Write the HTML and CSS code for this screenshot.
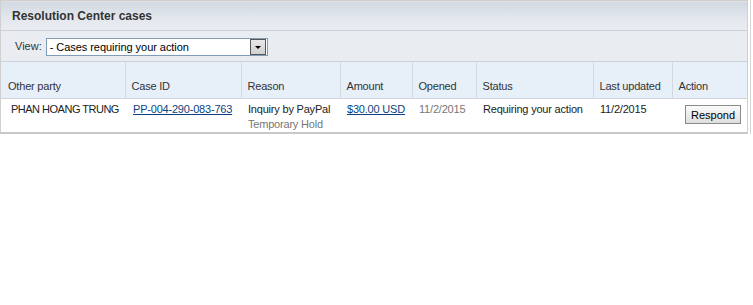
FILE: index.html
```html
<!DOCTYPE html>
<html lang="en">

<head>
    <meta charset="UTF-8">
    <title>Resolution Center cases</title>
    <link rel="stylesheet" href="styles.css">
</head>

<body>
    <div class="panel">
        <div class="panel-head">Resolution Center cases</div>

        <div class="view-row">
            <label for="viewSelect">View:</label>
            <div class="fake-select" id="viewSelect">
                <span class="select-text">- Cases requiring your action</span>
                <span class="select-btn"><span class="arrow"></span></span>
            </div>
        </div>

        <table class="cases">
            <colgroup>
                <col style="width:124px">
                <col style="width:116px">
                <col style="width:99px">
                <col style="width:72px">
                <col style="width:64px">
                <col style="width:117px">
                <col style="width:79px">
                <col style="width:75px">
            </colgroup>
            <thead>
                <tr>
                    <th>Other party</th>
                    <th>Case ID</th>
                    <th>Reason</th>
                    <th>Amount</th>
                    <th>Opened</th>
                    <th>Status</th>
                    <th>Last updated</th>
                    <th>Action</th>
                </tr>
            </thead>
            <tbody>
                <tr>
                    <td>PHAN HOANG TRUNG</td>
                    <td><a href="#">PP-004-290-083-763</a></td>
                    <td>Inquiry by PayPal<br><span class="muted">Temporary Hold</span></td>
                    <td><a href="#">$30.00 USD</a></td>
                    <td class="muted">11/2/2015</td>
                    <td>Requiring your action</td>
                    <td>11/2/2015</td>
                    <td class="action"><button class="respond-btn">Respond</button></td>
                </tr>
            </tbody>
        </table>
    </div>
</body>

</html>
```

FILE: styles.css
```css
body {
    margin: 0;
    background: #fff;
    font-family: 'Liberation Sans', Arial, sans-serif;
    font-size: 11px;
    color: #222;
}

.panel {
    width: 746px;
    border: 1px solid #cfcfcf;
    border-bottom: 2px solid #c8c8c8;
    box-shadow: 2px 0 0 #fff, 3px 0 0 #d4d4d4;
}

.panel-head {
    height: 28px;
    line-height: 29px;
    padding-left: 11px;
    font-size: 12px;
    font-weight: bold;
    color: #333;
    background: linear-gradient(#d2d9e2, #e4e8ee 60%, #e9ecf1);
    border-top: 1px solid #e0e0e0;
    border-bottom: 1px solid #cdd1d6;
}

.view-row {
    display: flex;
    align-items: center;
    height: 30px;
    padding-left: 14px;
    background: #e9edf2;
    border-bottom: 1px solid #cdd2d8;
    color: #333;
}

.view-row label {
    margin-right: 4px;
}

.fake-select {
    display: flex;
    align-items: center;
    width: 220px;
    height: 16px;
    border: 1px solid #7f9db9;
    background: #fff;
    margin-top: 1px;
}

.select-text {
    flex: 1;
    padding-left: 3px;
    color: #000;
    letter-spacing: -0.05px;
}

.select-btn {
    display: flex;
    align-items: center;
    justify-content: center;
    width: 14px;
    height: 14px;
    margin-right: 1px;
    border: 1px solid #555;
    background: linear-gradient(#e8e8e8, #d0d0d0);
}

.arrow {
    width: 0;
    height: 0;
    border-left: 3px solid transparent;
    border-right: 3px solid transparent;
    border-top: 3px solid #000;
    margin-top: 2px;
}

.cases {
    width: 746px;
    border-collapse: collapse;
    table-layout: fixed;
}

.cases th,
.cases td {
    white-space: nowrap;
    letter-spacing: -0.2px;
}

.cases th {
    height: 25px;
    padding: 11px 4px 0 6px;
    text-align: left;
    font-weight: normal;
    color: #333;
    background: #e7eff9;
    border-left: 1px solid #d3d9e1;
    border-bottom: 1px solid #d0d5db;
}

.cases th:first-child {
    border-left: none;
    padding-left: 7px;
}

.cases td {
    height: 29px;
    padding: 3px 2px 0 7px;
    vertical-align: top;
    line-height: 15px;
    color: #222;
}

.cases td:first-child {
    padding-left: 10px;
    letter-spacing: -0.5px;
}

.cases td:nth-child(2) {
    padding-left: 8px;
}

.cases a {
    color: #0e3f80;
}

.cases .muted {
    color: #777;
}

.cases td.action {
    height: 26px;
    padding-left: 13px;
    padding-top: 6px;
}

.respond-btn {
    font-family: 'Liberation Sans', Arial, sans-serif;
    font-size: 11px;
    color: #000;
    width: 56px;
    height: 19px;
    padding: 0;
    border: 1px solid #8a8a8a;
    background: linear-gradient(#fbfbfb, #dedede);
    cursor: pointer;
}
```
